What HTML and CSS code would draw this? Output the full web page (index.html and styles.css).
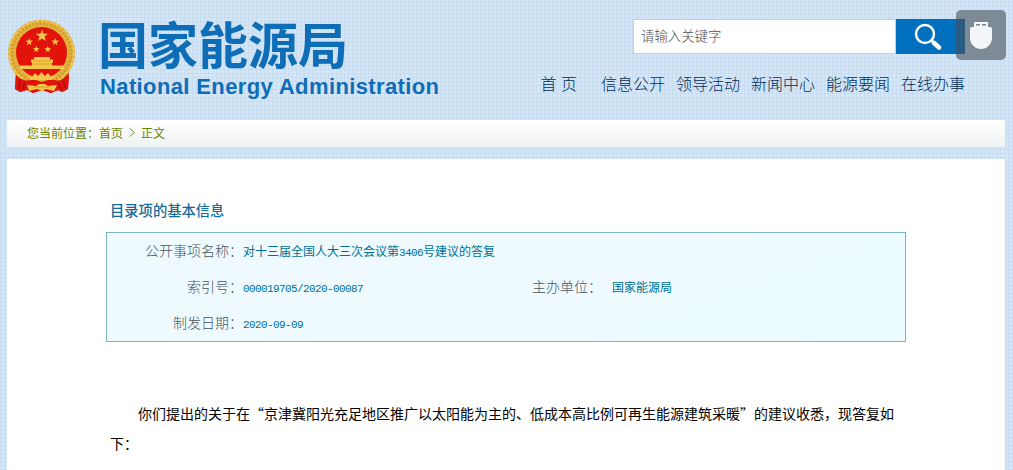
FILE: index.html
```
<!DOCTYPE html>
<html lang="zh-CN">
<head>
<meta charset="utf-8">
<title>国家能源局</title>
<link rel="stylesheet" href="styles.css">
</head>
<body>
<header class="header">
  <div class="brand">
    <svg class="emblem" viewBox="0 0 70 75" width="70" height="75">
      <path d="M9 50 L8 70 L13 73 L20 71 L26 74 L35 71 L44 74 L51 71 L55 73 L61 70 L62 50 L35 56Z" fill="#e2130b"/>
      <circle cx="34.5" cy="34" r="33.5" fill="#e3b13c"/>
      <circle cx="34.5" cy="34" r="29.5" fill="none" stroke="#cf9828" stroke-width="3" stroke-dasharray="1.5 2.200"/>
      <circle cx="34.5" cy="34" r="32" fill="none" stroke="#f2cf62" stroke-width="1.500" stroke-dasharray="3 2"/>
      <circle cx="34.5" cy="33.500" r="25.500" fill="#e2130b"/>
      <path d="M9 57q10 7 17 3l9 3 9-3q9 4 18-3l-1 13-6 3-4-2-7 3-9-3-9 3-6-3-7 2-5-3z" fill="#df150c"/>
      <path d="M13 61l-1 9M18 63l-2 7M56 61l2 8M51 63l3 7" stroke="#a90d08" stroke-width="1.200" fill="none"/>
      <g fill="#f4c64a">
        <path id="star" d="M35 10.500l1.500 4.200 4.700.1-3.700 2.800 1.300 4.400-3.800-2.600-3.800 2.600 1.300-4.400-3.700-2.800 4.700-.1z"/>
        <use href="#star" transform="translate(.5 12.500) scale(.62)"/>
        <use href="#star" transform="translate(26.500 12.500) scale(.62)"/>
        <use href="#star" transform="translate(10 21) scale(.55)"/>
        <use href="#star" transform="translate(21.500 21) scale(.55)"/>
        <path d="M27 38h16v2.500h3v3h-1v3h12v3.500H13v-3.500h12v-3h-1v-3h3z"/>
        <path d="M20 57l5 1 3-4 3 3 3.500-4 3.500 4 3-3 3 4 5-1-4 4H24z"/>
        <path d="M20 66l9 1 3-2h6l3 2 9-1-3 6-8-2-4 2-5-2-8 2z"/>
      </g>
      <path d="M26 42h18M25 45h20M27 68h16" stroke="#d58a20" stroke-width=".7"/>
    </svg>
    <div class="brand-text">
      <div class="brand-cn">国家能源局</div>
      <div class="brand-en">National Energy Administration</div>
    </div>
  </div>
  <div class="tools">
    <form class="search">
      <span class="search-field">请输入关键字</span>
      <span class="search-button">
        <svg width="28" height="28" viewBox="0 0 28 28"><circle cx="11" cy="11" r="9" fill="none" stroke="#fff" stroke-width="2.400"/><path d="M17.500 17.500l2.500 2.500" stroke="#fff" stroke-width="2.400"/><path d="M20 20l5 4.500" stroke="#fff" stroke-width="4.500" stroke-linecap="round"/></svg>
      </span>
    </form>
    <nav class="nav"><a class="nav-home">首 页</a><a>信息公开</a><a>领导活动</a><a>新闻中心</a><a>能源要闻</a><a>在线办事</a></nav>
  </div>
  <div class="plug">
    <svg width="24" height="30" viewBox="0 0 24 30"><path d="M5 1h14v5h2q2 0 2 2v9a11 11 0 0 1-22 0V8q0-2 2-2h2z" fill="#f4f5f8"/><path d="M7 3.700h4M13 3.700h4" stroke="#77828e" stroke-width="1.500"/></svg>
  </div>
</header>
<div class="crumbs"><span>您当前位置：</span><span>首页</span><svg class="chevron" width="6" height="9" viewBox="0 0 6 9"><path d="M.5.500l5 4-5 4" fill="none" stroke="#7d982f"/></svg><span>正文</span></div>
<main class="panel">
  <h1 class="title">目录项的基本信息</h1>
  <div class="info">
    <span class="label">公开事项名称：</span><span class="value wide">对十三届全国人大三次会议第<span class="num">3406</span>号建议的答复</span>
    <span class="label">索引号：</span><span class="value"><span class="num">000019705/2020-00087</span></span>
    <span class="label">主办单位：</span><span class="value unit">国家能源局</span>
    <span class="label">制发日期：</span><span class="value wide"><span class="num">2020-09-09</span></span>
  </div>
  <p class="article">你们提出的关于在“京津冀阳光充足地区推广以太阳能为主的、低成本高比例可再生能源建筑采暖”的建议收悉，现答复如下：</p>
</main>
</body>
</html>
```
FILE: styles.css
```
* { box-sizing: border-box; }
body {
  margin: 0;
  height: 470px;
  overflow: hidden;
  font-family: "Noto Sans CJK SC", sans-serif;
  font-size: 14px;
  background:
    repeating-linear-gradient(90deg, rgba(120,165,215,.11) 0 1px, transparent 1px 4px),
    repeating-linear-gradient(0deg, rgba(120,165,215,.11) 0 1px, transparent 1px 4px),
    #d4e6f6;
}
.header {
  position: relative;
  display: flex;
  justify-content: space-between;
  height: 120px;
  padding: 19px 48px 0 7px;
}
.brand { display: flex; gap: 23px; }
.brand-text { color: #0d6db7; white-space: nowrap; }
.brand-cn {
  height: 55px;
  margin: 0 0 0 -2px;
  font-size: 50px;
  line-height: 47px;
  font-weight: 700;
}
.brand-en {
  font: bold 22px/25px "Liberation Sans", Arial, sans-serif;
  letter-spacing: .38px;
}
.tools { display: flex; flex-direction: column; align-items: flex-end; }
.search { display: flex; width: 332px; height: 35px; margin: 0; }
.search-field {
  flex: 1;
  padding-left: 7px;
  background: #fff;
  border: 1px solid #c4cfda;
  font-size: 13.400px;
  font-weight: 300;
  line-height: 31px;
  color: #4f4f4f;
}
.search-button {
  width: 69px;
  padding: 4px 0 0 18px;
  background: #006fbe;
}
.nav {
  display: flex;
  gap: 11px;
  margin-top: 17px;
  font-size: 16px;
  font-weight: 300;
  line-height: 24px;
  color: #002d58;
  white-space: nowrap;
}
.nav-home { margin-right: 13px; word-spacing: 1px; }
.plug {
  position: absolute;
  left: 956px;
  top: 10px;
  width: 50px;
  height: 50px;
  padding: 11px 0 0 13px;
  border-radius: 5px;
  background: rgba(70,78,86,.6);
}
.crumbs {
  display: flex;
  align-items: center;
  width: 999px;
  height: 28px;
  margin-left: 7px;
  padding: 0 0 2px 20px;
  border: 1px solid #d2dce6;
  border-width: 0 1px 1px 0;
  background: linear-gradient(#fff, #eff2f4);
  font-size: 12px;
  line-height: 24px;
  color: #688500;
}
.chevron { margin: 0 6px; }
.panel {
  width: 999px;
  height: 312px;
  margin: 11px 0 0 7px;
  padding: 40px 99px 0;
  background: #fff;
  border-right: 1px solid #cbd8e5;
}
.title {
  margin: 0 0 11px 4px;
  font-size: 14.300px;
  line-height: 22px;
  font-weight: 500;
  color: #136c9b;
}
.info {
  display: grid;
  grid-template-columns: 136px 281px 78px 1fr;
  grid-auto-rows: 36px;
  width: 800px;
  height: 110px;
  line-height: 35px;
  background: linear-gradient(160deg, #eefafd, #effaff 50%, #eafcff);
  border: 1px solid #7eb3c5;
}
.label {
  text-align: right;
  font-weight: 300;
  line-height: 34px;
  color: #48545e;
}
.value { font-size: 12px; color: #007093; }
.wide { grid-column: span 3; }
.unit { padding-left: 10px; }
.num {
  display: inline-block;
  line-height: 32px;
  font-family: "Liberation Mono", monospace;
  font-size: 11px;
  letter-spacing: -.6px;
}
.article {
  width: 785px;
  margin: 56px 0 0 4px;
  text-indent: 28px;
  line-height: 30px;
  color: #000;
}
```
